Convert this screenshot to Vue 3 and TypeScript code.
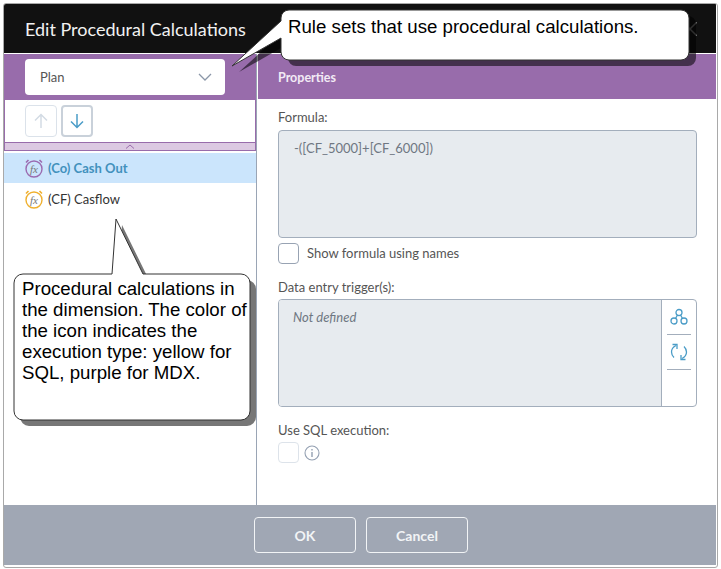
<script setup lang="ts">
const items = [
  { id: 'co', label: '(Co) Cash Out', color: '#9b6bb0', active: true },
  { id: 'cf', label: '(CF) Casflow', color: '#efb02f', active: false },
]
</script>

<template>
  <div class="frame">
    <div class="dialog">
      <header class="head">
        <h1>Edit Procedural Calculations</h1>
        <svg class="close" width="14" height="14" viewBox="0 0 14 14"><path d="M0 0 14 14M14 0 0 14" fill="none" stroke="#666" stroke-width="1.500" /></svg>
      </header>
      <div class="body">
        <aside class="left">
          <div class="combo-bar">
            <div class="combo">
              <span>Plan</span>
              <svg width="14" height="8" viewBox="0 0 14 8"><path d="M1 1l6 6 6-6" fill="none" stroke="#8b97a8" stroke-width="1.300" /></svg>
            </div>
          </div>
          <div class="tools">
            <button class="tool off">
              <svg width="14" height="16" viewBox="0 0 14 16"><path d="M7 15V1.500M1 7.500l6-6 6 6" fill="none" stroke="#d3dbe4" stroke-width="1.500" /></svg>
            </button>
            <button class="tool on">
              <svg width="14" height="16" viewBox="0 0 14 16"><path d="M7 1v13.500M1 8.500l6 6 6-6" fill="none" stroke="#4a9cc7" stroke-width="1.500" /></svg>
            </button>
          </div>
          <div class="collapse">
            <svg width="10" height="5" viewBox="0 0 10 5"><path d="M1 4.500l4-3.500 4 3.500" fill="none" stroke="#9b6bac" stroke-width="1" /></svg>
          </div>
          <ul class="list">
            <li v-for="item in items" :key="item.id" :class="{ active: item.active }">
              <svg width="20" height="20" viewBox="0 0 20 20" :style="{ color: item.color }">
                <circle cx="10" cy="11" r="8" fill="none" stroke="currentColor" stroke-width="1.400" />
                <path d="M2 4.500 4.500 2M18 4.500 15.500 2" fill="none" stroke="currentColor" stroke-width="1.600" />
                <text x="10" y="14.500" text-anchor="middle" class="fx">fx</text>
              </svg>
              <span>{{ item.label }}</span>
            </li>
          </ul>
        </aside>
        <main class="right">
          <div class="props">Properties</div>
          <div class="form">
            <label class="first">Formula:</label>
            <div class="formula">-([CF_5000]+[CF_6000])</div>
            <div class="check-row">
              <span class="check"></span>
              <span>Show formula using names</span>
            </div>
            <label class="second">Data entry trigger(s):</label>
            <div class="trigger">
              <div class="trigger-text">Not defined</div>
              <div class="trigger-side">
                <div class="side-btn">
                  <svg width="18" height="18" viewBox="0 0 18 18" fill="none" stroke="#4a9cc7" stroke-width="1.300">
                    <circle cx="9" cy="4.500" r="3" /><circle cx="4" cy="13" r="3" /><circle cx="14" cy="13" r="3" />
                    <path d="M7.500 7 5.500 10.500M10.500 7l2 3.500" />
                  </svg>
                </div>
                <div class="side-btn">
                  <svg width="18" height="20" viewBox="0 0 18 20" fill="none" stroke="#4a9cc7" stroke-width="1.300">
                    <path d="M6 3.500C3 5 1.500 7.500 1.500 10c0 2 1 4 2.500 5.500" />
                    <path d="M12 16.500c3-1.500 4.500-4 4.500-6.500 0-2-1-4-2.500-5.500" />
                    <path d="M2.500 2.500H7V7M15.500 17.500H11V13" />
                  </svg>
                </div>
              </div>
            </div>
            <label class="third">Use SQL execution:</label>
            <div class="sql-row">
              <span class="check faint"></span>
              <svg width="16" height="16" viewBox="0 0 16 16" fill="none" stroke="#94a0b2" stroke-width="1.100">
                <circle cx="8" cy="8" r="7" /><path d="M8 7v5M8 4v1.500" stroke-width="1.400" />
              </svg>
            </div>
          </div>
        </main>
      </div>
      <footer class="foot">
        <button class="btn">OK</button>
        <button class="btn">Cancel</button>
      </footer>
    </div>

    <svg class="shapes" width="721" height="569" viewBox="0 0 721 569">
      <path d="M232 66 281 21V18a8 8 0 0 1 8-8H681a8 8 0 0 1 8 8V52a8 8 0 0 1-8 8H289a8 8 0 0 1-8-8V38Z" fill="#000" fill-opacity=".55" transform="translate(7 6)" />
      <path d="M232 66 281 21V18a8 8 0 0 1 8-8H681a8 8 0 0 1 8 8V52a8 8 0 0 1-8 8H289a8 8 0 0 1-8-8V38Z" fill="#fff" stroke="#333" stroke-width="1" />
      <path d="M116 219 143 274H241a9 9 0 0 1 9 9V411a9 9 0 0 1-9 9H23a9 9 0 0 1-9-9V283a9 9 0 0 1 9-9H112Z" fill="#777" transform="translate(6 6)" />
      <path d="M116 219 143 274H241a9 9 0 0 1 9 9V411a9 9 0 0 1-9 9H23a9 9 0 0 1-9-9V283a9 9 0 0 1 9-9H112Z" fill="#fff" stroke="#333" stroke-width="1" />
    </svg>
    <div class="note top">Rule sets that use procedural calculations.</div>
    <div class="note low">Procedural calculations in the dimension. The color of the icon indicates the execution type: yellow for SQL, purple for MDX.</div>
  </div>
</template>

<style>
html, body { margin: 0; background: #fff; }
</style>

<style scoped>
.frame {
  position: relative;
  box-sizing: border-box;
  width: 721px;
  height: 569px;
  padding: 3px 3px 1px 3px;
  background: #fff;
  overflow: hidden;
  font-family: Lato, "Liberation Sans", sans-serif;
}
.dialog {
  box-sizing: border-box;
  height: 100%;
  background: #fff;
  border: 1px solid #a9a9a9;
  border-radius: 3px;
  padding: 0 1px 2px 0;
  display: flex;
  flex-direction: column;
  overflow: hidden;
}
.head {
  box-sizing: border-box;
  flex: none;
  height: 50px;
  background: #111;
  display: flex;
  align-items: center;
  justify-content: space-between;
  padding: 0 19px 0 21px;
  border-bottom: 1px solid #fff;
}
h1 {
  margin: 0;
  font-size: 18px;
  font-weight: 400;
  color: #f2f2f2;
}
.close { flex: none; }
.body { flex: 1; display: flex; min-height: 0; }
.left {
  box-sizing: border-box;
  flex: none;
  width: 253px;
  border-right: 1px solid #9aa5b5;
}
.combo-bar {
  height: 46px;
  background: #986cab;
  padding: 5px 0 0 21px;
  box-sizing: border-box;
}
.combo {
  box-sizing: border-box;
  width: 200px;
  height: 36px;
  background: #fff;
  border-radius: 4px;
  display: flex;
  align-items: center;
  justify-content: space-between;
  padding: 0 13px 0 15px;
  font-size: 13px;
  color: #555;
}
.tools {
  box-sizing: border-box;
  height: 42px;
  display: flex;
  gap: 4px;
  padding: 5px 0 0 20px;
  border-left: 1px solid #986cab;
  border-right: 1px solid #986cab;
}
.tool {
  box-sizing: border-box;
  width: 32px;
  height: 32px;
  padding: 0;
  background: #fff;
  border-radius: 4px;
  display: flex;
  align-items: center;
  justify-content: center;
}
.tool.off { border: 1px solid #dbe2ea; }
.tool.on { border: 2px solid #c9d1da; }
.collapse {
  box-sizing: border-box;
  height: 9px;
  background: #dcc9e2;
  border: 1px solid #986cab;
  display: flex;
  align-items: center;
  justify-content: center;
}
.list { list-style: none; margin: 2px 0 0; padding: 0; }
.list li {
  height: 30px;
  margin-bottom: 1px;
  display: flex;
  align-items: center;
  gap: 4px;
  padding-left: 20px;
  font-size: 13px;
  color: #333;
}
.list li.active {
  background: #cbe5fc;
  color: #4291bd;
  font-weight: 700;
}
.fx {
  font-family: "Liberation Serif", serif;
  font-style: italic;
  font-size: 11px;
  font-weight: 400;
  fill: #777;
}
.right { flex: 1; min-width: 0; display: flex; flex-direction: column; }
.props {
  flex: none;
  height: 45px;
  background: #986cab;
  color: #f2eaf5;
  font-size: 12.500px;
  font-weight: 700;
  line-height: 47px;
  padding-left: 20px;
  border-left: 1px solid #fff;
}
.form { padding: 0 19px 0 21px; color: #555; font-size: 13px; }
label { display: block; }
.first { margin-top: 9px; line-height: 18px; }
.formula {
  box-sizing: border-box;
  height: 108px;
  margin-top: 4px;
  background: #e7ebef;
  border: 1px solid #a3aebc;
  border-radius: 4px;
  padding: 9px 15px;
  color: #6f7782;
  font-size: 13px;
}
.check-row {
  display: flex;
  align-items: center;
  gap: 8px;
  margin-top: 5px;
  height: 20px;
}
.check {
  box-sizing: border-box;
  width: 21px;
  height: 21px;
  border: 1px solid #98a3b3;
  border-radius: 4px;
  background: #fff;
}
.check.faint { border-color: #dde3ea; }
.second { margin-top: 15px; line-height: 18px; }
.trigger {
  box-sizing: border-box;
  height: 108px;
  margin-top: 3px;
  display: flex;
  border: 1px solid #a3aebc;
  border-radius: 4px;
  overflow: hidden;
}
.trigger-text {
  flex: 1;
  background: #e7ebef;
  padding: 9px 14px;
  font-style: italic;
  color: #6f7782;
}
.trigger-side {
  flex: none;
  box-sizing: border-box;
  width: 35px;
  padding: 0 5px;
  border-left: 1px solid #a3aebc;
}
.side-btn {
  height: 34px;
  display: flex;
  align-items: center;
  justify-content: center;
  border-bottom: 1px solid #a3aebc;
}
.third { margin-top: 14px; line-height: 18px; }
.sql-row { display: flex; align-items: center; gap: 5px; margin-top: 3px; }
.foot {
  flex: none;
  height: 60px;
  background: #a0a7b4;
  display: flex;
  justify-content: center;
  gap: 10px;
  padding: 12px 0 0 2px;
  box-sizing: border-box;
}
.btn {
  box-sizing: border-box;
  width: 102px;
  height: 36px;
  background: transparent;
  border: 1px solid #f2f4f6;
  border-radius: 4px;
  color: #f2f4f6;
  font: 700 14px Lato, "Liberation Sans", sans-serif;
}
.shapes { position: absolute; left: 0; top: 0; pointer-events: none; }
.note {
  position: absolute;
  font-family: "Liberation Sans", Arial, sans-serif;
  color: #000;
  font-size: 18.670px;
  line-height: 21px;
}
.top { left: 288px; top: 16px; white-space: nowrap; }
.low { left: 22px; top: 278px; width: 230px; }
</style>
